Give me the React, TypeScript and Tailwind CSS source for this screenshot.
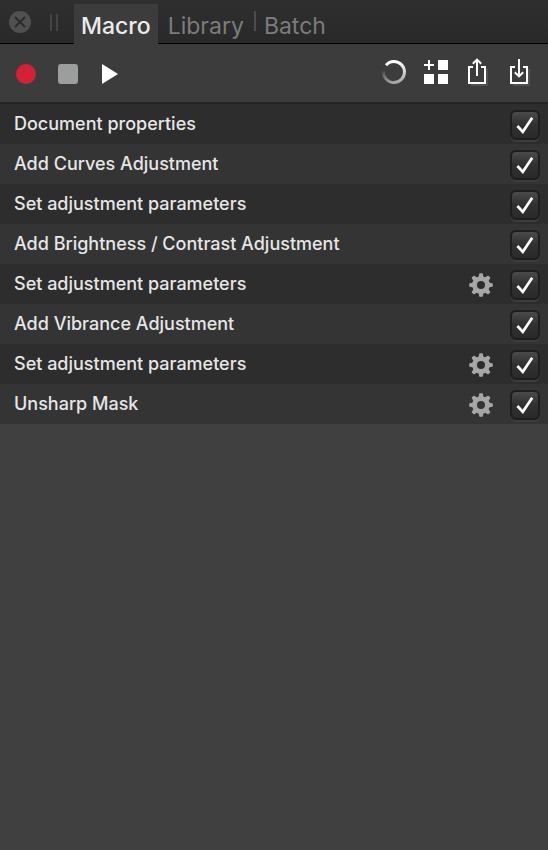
import { useState } from "react";

type Step = {
  id: number;
  label: string;
  editable?: boolean;
};

const steps: Step[] = [
  { id: 1, label: "Document properties" },
  { id: 2, label: "Add Curves Adjustment" },
  { id: 3, label: "Set adjustment parameters" },
  { id: 4, label: "Add Brightness / Contrast Adjustment" },
  { id: 5, label: "Set adjustment parameters", editable: true },
  { id: 6, label: "Add Vibrance Adjustment" },
  { id: 7, label: "Set adjustment parameters", editable: true },
  { id: 8, label: "Unsharp Mask", editable: true },
];

const teeth = [0, 45, 90, 135, 180, 225, 270, 315];

function CloseIcon() {
  return (
    <svg width="22" height="22" viewBox="0 0 22 22">
      <circle cx="11" cy="11" r="11" fill="#505050" />
      <path d="M6 6l10 10M16 6L6 16" stroke="#2c2c2c" strokeWidth="2.2" />
    </svg>
  );
}

function SpinnerIcon() {
  return (
    <svg width="24" height="24" viewBox="0 0 24 24" fill="none" strokeWidth="3">
      <defs>
        <linearGradient id="spin-right" x1="0" y1="0" x2="0" y2="1">
          <stop offset="0" stopColor="#ffffff" />
          <stop offset="1" stopColor="#a4a4a4" />
        </linearGradient>
        <linearGradient id="spin-left" x1="0" y1="1" x2="0" y2="0">
          <stop offset="0" stopColor="#a4a4a4" />
          <stop offset="1" stopColor="#404040" />
        </linearGradient>
      </defs>
      <path d="M4 5.200A10.500 10.500 0 0 1 12 1.500A10.500 10.500 0 0 1 12 22.500" stroke="url(#spin-right)" />
      <path d="M12 22.500A10.500 10.500 0 0 1 1.600 10.500" stroke="url(#spin-left)" />
    </svg>
  );
}

function AddToLibraryIcon() {
  return (
    <svg width="24" height="24" viewBox="0 0 24 24" fill="#fff">
      <path d="M4 0h2v4h4v2H6v4H4V6H0V4h4z" />
      <path d="M14 0h10v10H14zM0 14h10v10H0zM14 14h10v10H14z" />
    </svg>
  );
}

function ExportIcon() {
  return (
    <svg width="20" height="28" viewBox="0 0 20 28" fill="none" strokeWidth="2">
      <path d="M3 27h16V11" stroke="#505050" />
      <path d="M5 9H1v16h16V9h-4" stroke="#fff" />
      <path d="M9 18V1.500M4.800 5.800L9 1.600l4.200 4.200" stroke="#fff" />
    </svg>
  );
}

function ImportIcon() {
  return (
    <svg width="20" height="28" viewBox="0 0 20 28" fill="none" strokeWidth="2">
      <path d="M3 27h16V11" stroke="#505050" />
      <path d="M5 9H1v16h16V9h-4" stroke="#fff" />
      <path d="M9 1v17.500M4.800 14.200L9 18.400l4.200-4.200" stroke="#fff" />
    </svg>
  );
}

function GearIcon() {
  return (
    <svg width="24" height="24" viewBox="0 0 24 24" fill="#a6a6a6">
      <circle cx="12" cy="12" r="6.400" fill="none" stroke="#a6a6a6" strokeWidth="4.800" />
      {teeth.map((angle) => (
        <path
          key={angle}
          d="M9.400 4.500L10.200 .8Q10.300 .2 11 .2h2Q13.700 .2 13.800 .8l.8 3.700z"
          transform={`rotate(${angle} 12 12)`}
        />
      ))}
    </svg>
  );
}

function StepRow({ step }: { step: Step }) {
  const [enabled, setEnabled] = useState(true);
  const inputId = `step-${step.id}`;

  return (
    <li className="flex h-10 items-center bg-[#2d2d2d] pr-2 pl-3.5 even:bg-[#343434]">
      <label htmlFor={inputId} className="flex-1 text-lg leading-6 font-medium">
        {step.label}
      </label>
      {step.editable && (
        <button type="button" aria-label={`Edit ${step.label}`} className="mt-0.5 mr-[17px]">
          <GearIcon />
        </button>
      )}
      <span className="mt-0.5 grid">
        <input
          id={inputId}
          type="checkbox"
          checked={enabled}
          onChange={(e) => setEnabled(e.target.checked)}
          className="peer col-start-1 row-start-1 size-[30px] appearance-none rounded-md border-2 border-[#1e1e1e] bg-linear-to-b from-[#4a4a4a] via-[#303030] to-[#2a2a2a] shadow-[0_2px_0_#3c3c3c]"
        />
        <svg
          viewBox="0 0 30 30"
          fill="none"
          className="pointer-events-none invisible col-start-1 row-start-1 size-[30px] peer-checked:visible"
        >
          <path d="M7.400 16L12.800 21.800L22.200 7.800" stroke="#fff" strokeWidth="2.700" />
        </svg>
      </span>
    </li>
  );
}

export default function App() {
  return (
    <div className="flex min-h-screen w-full flex-col bg-[#404040] font-['Inter','Liberation_Sans',sans-serif] text-[#e6e6e6]">
      <header className="flex h-11 items-end border-b border-black bg-linear-to-b from-[#2f2f2f] to-[#292929]">
        <button type="button" aria-label="Close panel" className="mb-2.5 ml-[9px]">
          <CloseIcon />
        </button>
        <div className="mr-4 mb-3 ml-[19px] h-[17px] w-2 border-x-2 border-[#444444]" />
        <nav className="flex items-end text-[23px] leading-8">
          <button
            type="button"
            className="-mb-px h-10 bg-[#3c3c3c] px-[7px] pt-1 font-medium text-[#ebebeb]"
          >
            Macro
          </button>
          <button type="button" className="mb-px px-2.5 text-[#7c7c7c]">
            Library
          </button>
          <span className="mb-3 h-5 w-0.5 bg-[#4c4c4c]" />
          <button type="button" className="mb-px px-2 text-[#7c7c7c]">
            Batch
          </button>
        </nav>
      </header>

      <div className="flex h-[60px] items-center justify-between border-b-2 border-[#242424] bg-[#3c3c3c] pr-[18px] pl-4">
        <div className="flex items-center gap-[22px] pt-0.5">
          <button type="button" aria-label="Record" className="size-5 rounded-full bg-[#d32238]" />
          <button type="button" aria-label="Stop" className="size-5 rounded-[3px] bg-[#9c9e9d]" />
          <button type="button" aria-label="Play" className="ml-0.5">
            <svg width="16" height="20" viewBox="0 0 16 20">
              <path d="M0 0l16 10L0 20z" fill="#fff" />
            </svg>
          </button>
        </div>
        <div className="flex items-center gap-[22px] pb-0.5">
          <div className="-mr-0.5 flex gap-[18px]">
            <button type="button" aria-label="Reset">
              <SpinnerIcon />
            </button>
            <button type="button" aria-label="Add to library">
              <AddToLibraryIcon />
            </button>
          </div>
          <button type="button" aria-label="Export macro">
            <ExportIcon />
          </button>
          <button type="button" aria-label="Import macro">
            <ImportIcon />
          </button>
        </div>
      </div>

      <ul>
        {steps.map((step) => (
          <StepRow key={step.id} step={step} />
        ))}
      </ul>
    </div>
  );
}
